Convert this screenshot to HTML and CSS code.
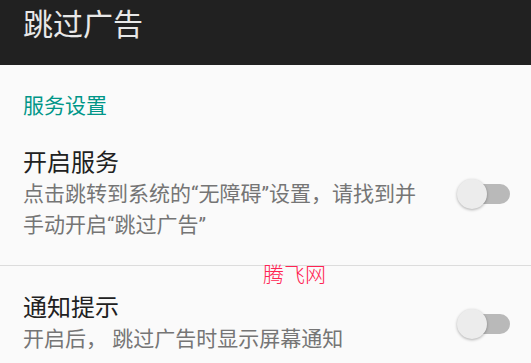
FILE: index.html
```html
<!DOCTYPE html>
<html lang="zh-CN">
<head>
<meta charset="utf-8">
<title>跳过广告</title>
<link rel="stylesheet" href="styles.css">
</head>
<body>
<header class="toolbar">
  <h1 class="toolbar-title">跳过广告</h1>
</header>
<main class="prefs">
  <div class="category">服务设置</div>
  <div class="pref">
    <div class="pref-text">
      <div class="pref-title">开启服务</div>
      <div class="pref-summary">点击跳转到系统的“无障碍”设置，请找到并手动开启“跳过广告”</div>
    </div>
    <div class="switch"><span class="track"></span><span class="thumb"></span></div>
  </div>
  <div class="divider"></div>
  <div class="pref">
    <div class="pref-text">
      <div class="pref-title">通知提示</div>
      <div class="pref-summary">开启后， 跳过广告时显示屏幕通知</div>
    </div>
    <div class="switch"><span class="track"></span><span class="thumb"></span></div>
  </div>
  <div class="watermark">腾飞网</div>
</main>
</body>
</html>
```
FILE: styles.css
```css
html, body {
  margin: 0;
  padding: 0;
}
body {
  width: 531px;
  height: 363px;
  overflow: hidden;
  background: #fafafa;
  font-family: Roboto, "Noto Sans CJK SC", sans-serif;
}
.toolbar {
  height: 65px;
  background: #212121;
  padding: 7px 23px 0;
  box-sizing: border-box;
}
.toolbar-title {
  margin: 0;
  font-size: 30px;
  font-weight: normal;
  line-height: 36px;
  color: #e8e8e8;
}
.prefs {
  position: relative;
}
.category {
  padding: 26px 23px 0;
  font-size: 21px;
  line-height: 30px;
  color: #009688;
}
.pref {
  display: flex;
  align-items: center;
  padding: 26px 21px 26px 23px;
}
.category + .pref {
  padding-top: 26px;
  padding-bottom: 24px;
}
.divider + .pref {
  padding-top: 26px;
}
.pref-text {
  flex: 1;
  min-width: 0;
  margin-right: 24px;
}
.pref-title {
  font-size: 24px;
  line-height: 32px;
  color: #212121;
}
.pref-summary {
  font-size: 21px;
  line-height: 31px;
  color: #757575;
}
.divider {
  height: 1px;
  background: #dcdcdc;
}
.switch {
  position: relative;
  flex: none;
  width: 53px;
  height: 30px;
}
.track {
  position: absolute;
  right: 0;
  top: 5px;
  width: 48px;
  height: 20px;
  border-radius: 10px;
  background: #b9b9b9;
}
.thumb {
  position: absolute;
  left: 0;
  top: 0;
  width: 30px;
  height: 30px;
  border-radius: 50%;
  background: #ececec;
  box-shadow: 0 1px 3px rgba(0, 0, 0, 0.3);
}
.watermark {
  position: absolute;
  left: 263px;
  top: 193px;
  font-size: 21px;
  line-height: 30px;
  color: #ff2352;
  font-family: "Noto Sans CJK SC", sans-serif;
  font-weight: 300;
}
```
